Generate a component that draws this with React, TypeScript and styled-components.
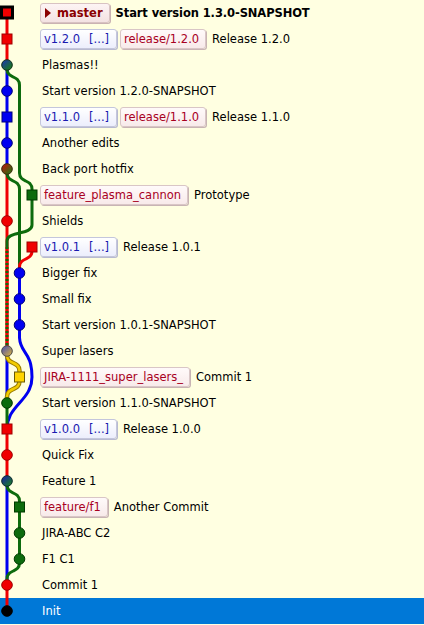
import React from "react";
import styled, { createGlobalStyle } from "styled-components";

const Global = createGlobalStyle`
  html, body { margin: 0; padding: 0; background: #ffffe1; }
  body { font-family: "DejaVu Sans", Verdana, sans-serif; font-size: 11.5px; }
`;

const ROW = 26;
const X = [7, 19.5, 32];
const Y = (r: number) => 13 + ROW * r;

const C = {
  red: "#f00000",
  blue: "#0000f0",
  green: "#0d6b0d",
  yellow: "#f2cc00",
  black: "#000000",
};

const vline = (l: number, r1: number, r2: number) =>
  `M ${X[l]} ${Y(r1)} L ${X[l]} ${Y(r2)}`;

const curve = (l1: number, r1: number, l2: number, r2: number) => {
  const y1 = Y(r1);
  const y2 = Y(r2);
  const ym = (y1 + y2) / 2 - 1;
  return `M ${X[l1]} ${y1} L ${X[l1]} ${y1 + 4} C ${X[l1]} ${ym + 2}, ${X[l2]} ${ym - 2}, ${X[l2]} ${y2 - 6} L ${X[l2]} ${y2}`;
};

type Edge = { d: string; color: string; dash?: boolean; outline?: string };

const edges: Edge[] = [
  { d: vline(0, 0, 2), color: C.red },
  { d: vline(0, 2, 6), color: C.blue },
  { d: curve(0, 2, 1, 3) + " " + vline(1, 3, 6), color: C.green },
  { d: curve(1, 6, 2, 7), color: C.green },
  { d: vline(0, 6, 13), color: C.red },
  { d: curve(0, 6, 1, 7) + " " + vline(1, 7, 10), color: C.green },
  { d: vline(2, 7, 8) + " " + curve(2, 8, 0, 9), color: C.green },
  { d: vline(0, 9, 13), color: C.green, dash: true },
  { d: curve(2, 9, 1, 10), color: C.red },
  { d: vline(1, 10, 12), color: C.blue },
  {
    d: `M ${X[1]} ${Y(12)} L ${X[1]} ${Y(12) + 12} C ${X[1]} ${Y(13) + 2}, ${X[2]} ${Y(13)}, ${X[2]} ${Y(14)} C ${X[2]} ${Y(15) - 2}, ${X[0]} ${Y(15) + 2}, ${X[0]} ${Y(16)}`,
    color: C.blue,
  },
  { d: vline(0, 13, 15), color: C.blue },
  { d: curve(0, 13, 1, 14) + " " + curve(1, 14, 0, 15), color: C.yellow, outline: "#9a7c00" },
  { d: vline(0, 15, 16), color: C.green },
  { d: vline(0, 16, 18), color: C.red },
  { d: vline(0, 18, 22), color: C.blue },
  { d: curve(0, 18, 1, 19) + " " + vline(1, 19, 21) + " " + curve(1, 21, 0, 22), color: C.green },
  { d: vline(0, 22, 23), color: C.red },
];

type NodeShape = "circle" | "square" | "head";
type GNode = { row: number; lane: number; shape: NodeShape; fill: string; fill2?: string; stroke: string };

const nodes: GNode[] = [
  { row: 0, lane: 0, shape: "head", fill: C.red, stroke: "#000" },
  { row: 1, lane: 0, shape: "square", fill: C.red, stroke: "#a00000" },
  { row: 2, lane: 0, shape: "circle", fill: "#1c3ca0", fill2: "#1a7a1a", stroke: "#10301a" },
  { row: 3, lane: 0, shape: "circle", fill: C.blue, stroke: "#00007a" },
  { row: 4, lane: 0, shape: "square", fill: C.blue, stroke: "#00007a" },
  { row: 5, lane: 0, shape: "circle", fill: C.blue, stroke: "#00007a" },
  { row: 6, lane: 0, shape: "circle", fill: "#b01c0a", fill2: "#2e7010", stroke: "#3a2a0a" },
  { row: 7, lane: 2, shape: "square", fill: C.green, stroke: "#003a00" },
  { row: 8, lane: 0, shape: "circle", fill: C.red, stroke: "#a00000" },
  { row: 9, lane: 2, shape: "square", fill: C.red, stroke: "#a00000" },
  { row: 10, lane: 1, shape: "circle", fill: C.blue, stroke: "#00007a" },
  { row: 11, lane: 1, shape: "circle", fill: C.blue, stroke: "#00007a" },
  { row: 12, lane: 1, shape: "circle", fill: C.blue, stroke: "#00007a" },
  { row: 13, lane: 0, shape: "circle", fill: "#5a5aa8", fill2: "#c8a848", stroke: "#4a4a4a" },
  { row: 14, lane: 1, shape: "square", fill: "#ffd400", stroke: "#6a5a00" },
  { row: 15, lane: 0, shape: "circle", fill: C.green, stroke: "#003a00" },
  { row: 16, lane: 0, shape: "square", fill: C.red, stroke: "#a00000" },
  { row: 17, lane: 0, shape: "circle", fill: C.red, stroke: "#a00000" },
  { row: 18, lane: 0, shape: "circle", fill: "#1a2a98", fill2: "#1a7a2a", stroke: "#0a2a2a" },
  { row: 19, lane: 1, shape: "square", fill: C.green, stroke: "#003a00" },
  { row: 20, lane: 1, shape: "circle", fill: C.green, stroke: "#003a00" },
  { row: 21, lane: 1, shape: "circle", fill: C.green, stroke: "#003a00" },
  { row: 22, lane: 0, shape: "circle", fill: C.red, stroke: "#a00000" },
  { row: 23, lane: 0, shape: "circle", fill: "#000", stroke: "#000" },
];

type Label = { kind: "head" | "tag" | "branch"; text: string };
type Commit = { message: string; labels?: Label[]; bold?: boolean };

const commits: Commit[] = [
  { message: "Start version 1.3.0-SNAPSHOT", bold: true, labels: [{ kind: "head", text: "master" }] },
  { message: "Release 1.2.0", labels: [{ kind: "tag", text: "v1.2.0" }, { kind: "branch", text: "release/1.2.0" }] },
  { message: "Plasmas!!" },
  { message: "Start version 1.2.0-SNAPSHOT" },
  { message: "Release 1.1.0", labels: [{ kind: "tag", text: "v1.1.0" }, { kind: "branch", text: "release/1.1.0" }] },
  { message: "Another edits" },
  { message: "Back port hotfix" },
  { message: "Prototype", labels: [{ kind: "branch", text: "feature_plasma_cannon" }] },
  { message: "Shields" },
  { message: "Release 1.0.1", labels: [{ kind: "tag", text: "v1.0.1" }] },
  { message: "Bigger fix" },
  { message: "Small fix" },
  { message: "Start version 1.0.1-SNAPSHOT" },
  { message: "Super lasers" },
  { message: "Commit 1", labels: [{ kind: "branch", text: "JIRA-1111_super_lasers_" }] },
  { message: "Start version 1.1.0-SNAPSHOT" },
  { message: "Release 1.0.0", labels: [{ kind: "tag", text: "v1.0.0" }] },
  { message: "Quick Fix" },
  { message: "Feature 1" },
  { message: "Another Commit", labels: [{ kind: "branch", text: "feature/f1" }] },
  { message: "JIRA-ABC C2" },
  { message: "F1 C1" },
  { message: "Commit 1" },
  { message: "Init" },
];

const List = styled.div`
  display: flex;
  flex-direction: column;
  width: 424px;
`;

const Row = styled.div<{ $selected?: boolean }>`
  display: flex;
  align-items: center;
  height: ${ROW}px;
  background: ${(p) => (p.$selected ? "#0078d7" : "transparent")};
  color: ${(p) => (p.$selected ? "#ffffff" : "#000000")};
  white-space: nowrap;
`;

const GraphCell = styled.svg`
  flex: none;
  width: 40px;
  height: ${ROW}px;
  display: block;
`;

const Refs = styled.div`
  display: flex;
  align-items: center;
  gap: 3px;
`;

const labelTheme = {
  head: { color: "#8a0000", bg: "linear-gradient(#fdf4f4, #f3e2e2)", border: "#d8c2c2", shadow: "#c9b2b2" },
  tag: { color: "#1a1ab0", bg: "linear-gradient(#ffffff, #eceefc)", border: "#c4c6dc", shadow: "#b8bad0" },
  branch: { color: "#a8001e", bg: "linear-gradient(#fffafa, #f8eaea)", border: "#d9c6c6", shadow: "#c8b4b4" },
};

const RefLabel = styled.span<{ $kind: Label["kind"] }>`
  display: inline-flex;
  align-items: center;
  box-sizing: border-box;
  height: 20px;
  padding: 0 ${(p) => (p.$kind === "tag" ? 7 : 6)}px 0 3px;
  border: 1px solid ${(p) => labelTheme[p.$kind].border};
  border-radius: 3px;
  background: ${(p) => labelTheme[p.$kind].bg};
  box-shadow: 1px 1px 0 ${(p) => labelTheme[p.$kind].shadow};
  color: ${(p) => labelTheme[p.$kind].color};
  font-weight: ${(p) => (p.$kind === "head" ? "bold" : "normal")};
`;

const HeadArrow = styled.span`
  width: 0;
  height: 0;
  border-top: 5px solid transparent;
  border-bottom: 5px solid transparent;
  border-left: 6px solid #8a0000;
  margin: 0 6px 0 1px;
`;

const More = styled.span`
  margin-left: 9px;
`;

const Message = styled.span<{ $bold?: boolean }>`
  margin-left: 2px;
  font-weight: ${(p) => (p.$bold ? "bold" : "normal")};
  letter-spacing: ${(p) => (p.$bold ? "-0.1px" : "0")};
`;

const RefsGap = styled.span`
  width: 1px;
  flex: none;
`;

function GraphDefs() {
  return (
    <defs>
      {nodes
        .filter((n) => n.fill2)
        .map((n) => (
          <linearGradient key={n.row} id={`g${n.row}`} x1="0" y1="0" x2="1" y2="1">
            <stop offset="0.15" stopColor={n.fill} />
            <stop offset="0.85" stopColor={n.fill2} />
          </linearGradient>
        ))}
    </defs>
  );
}

function GraphContent() {
  return (
    <>
      <GraphDefs />
      {edges.map((e, i) => (
        <g key={i} fill="none">
          {e.outline && <path d={e.d} stroke={e.outline} strokeWidth={4.5} />}
          {e.dash && <path d={e.d} stroke={C.red} strokeWidth={3} />}
          <path
            d={e.d}
            stroke={e.color}
            strokeWidth={e.outline ? 2.5 : 3}
            strokeDasharray={e.dash ? "2 2" : undefined}
          />
        </g>
      ))}
      {nodes.map((n) => {
        const cx = X[n.lane];
        const cy = Y(n.row);
        const fill = n.fill2 ? `url(#g${n.row})` : n.fill;
        if (n.shape === "head")
          return (
            <rect key={n.row} x={cx - 5.5} y={cy - 6} width={11} height={11} fill={fill} stroke="#000" strokeWidth={3} />
          );
        if (n.shape === "square")
          return (
            <rect key={n.row} x={cx - 5} y={cy - 5} width={10} height={10} fill={fill} stroke={n.stroke} strokeWidth={1} />
          );
        return <circle key={n.row} cx={cx} cy={cy} r={5.3} fill={fill} stroke={n.stroke} strokeWidth={1} />;
      })}
    </>
  );
}

export default function App() {
  return (
    <>
      <Global />
      <List>
        {commits.map((c, i) => (
          <Row key={i} $selected={i === commits.length - 1}>
            <GraphCell viewBox={`0 ${i * ROW} 40 ${ROW}`}>
              <GraphContent />
            </GraphCell>
            {c.labels && (
              <Refs>
                {c.labels.map((l, j) => (
                  <RefLabel key={j} $kind={l.kind}>
                    {l.kind === "head" && <HeadArrow />}
                    {l.text}
                    {l.kind === "tag" && <More>[...]</More>}
                  </RefLabel>
                ))}
                <RefsGap />
              </Refs>
            )}
            <Message $bold={c.bold}>{c.message}</Message>
          </Row>
        ))}
      </List>
    </>
  );
}
